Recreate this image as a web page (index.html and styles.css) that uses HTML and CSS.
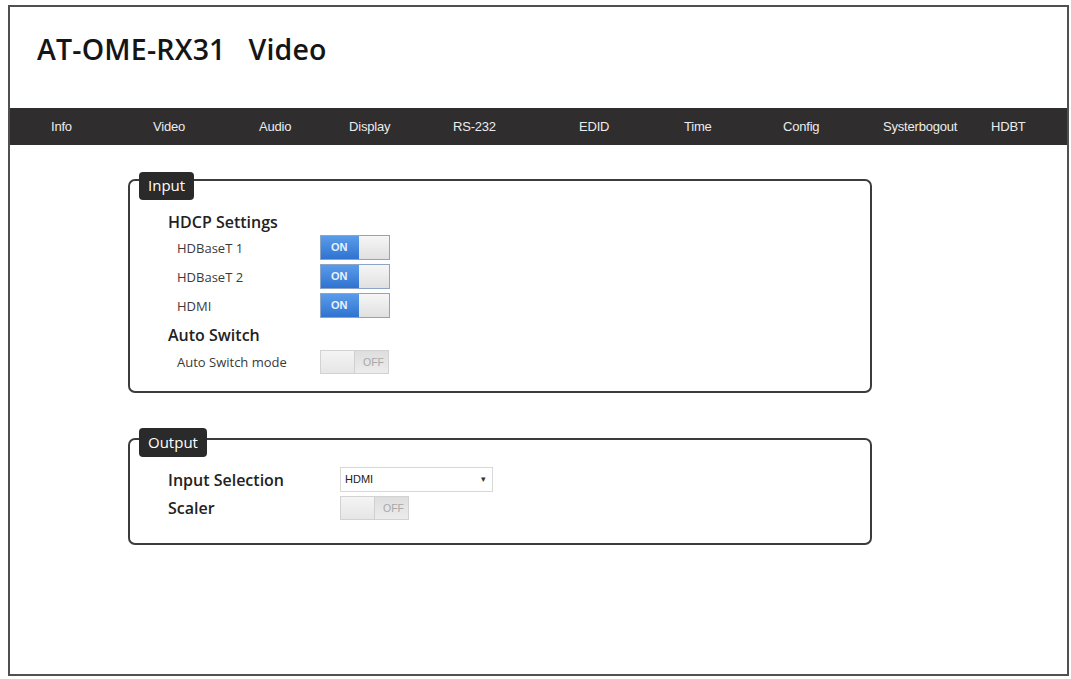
FILE: index.html
```html
<!DOCTYPE html>
<html>
<head>
<meta charset="utf-8">
<link rel="stylesheet" href="styles.css">
</head>
<body>
<div class="frame">
  <header class="head">
    <h1 class="title">AT-OME-RX31&nbsp;&nbsp; Video</h1>
  </header>
  <nav class="nav">
    <span>Info</span>
    <span>Video</span>
    <span>Audio</span>
    <span>Display</span>
    <span>RS-232</span>
    <span>EDID</span>
    <span>Time</span>
    <span>Config</span>
    <span>Systerbogout</span>
    <span>HDBT</span>
  </nav>
  <main class="content">
    <section class="box box-input">
      <div class="legend">Input</div>
      <div class="heading h-hdcp">HDCP Settings</div>
      <div class="rows">
        <div class="row"><span class="label">HDBaseT 1</span><span class="toggle on"><span class="t-on">ON</span><span class="t-rest"></span></span></div>
        <div class="row"><span class="label">HDBaseT 2</span><span class="toggle on"><span class="t-on">ON</span><span class="t-rest"></span></span></div>
        <div class="row"><span class="label">HDMI</span><span class="toggle on"><span class="t-on">ON</span><span class="t-rest"></span></span></div>
      </div>
      <div class="heading h-auto">Auto Switch</div>
      <div class="rows">
        <div class="row"><span class="label">Auto Switch mode</span><span class="toggle off"><span class="t-rest"></span><span class="t-off">OFF</span></span></div>
      </div>
    </section>
    <section class="box box-output">
      <div class="legend legend-out">Output</div>
      <div class="orow orow-first"><span class="heading olabel">Input Selection</span><span class="select">HDMI<span class="arrow">&#9662;</span></span></div>
      <div class="orow"><span class="heading olabel">Scaler</span><span class="toggle off"><span class="t-rest"></span><span class="t-off">OFF</span></span></div>
    </section>
  </main>
</div>
</body>
</html>
```

FILE: styles.css
```css
html, body {
  margin: 0;
  padding: 0;
  background: #fff;
}
.frame {
  box-sizing: border-box;
  margin: 5px 0 0 8px;
  width: 1061px;
  height: 671px;
  border: 2px solid #505050;
  display: flex;
  flex-direction: column;
}
.head {
  height: 101px;
  box-sizing: border-box;
  padding: 24px 0 0 27px;
}
.title {
  margin: 0;
  font-family: "Open Sans", "DejaVu Sans", sans-serif;
  font-weight: 600;
  font-size: 28.5px;
  line-height: 36px;
  color: #151515;
  letter-spacing: 0.2px;
}
.nav {
  height: 37px;
  background: #2f2d2d;
  display: grid;
  grid-template-columns: 102px 106px 90px 104px 126px 105px 99px 100px 108px auto;
  align-items: center;
  padding-left: 41px;
  font-family: "Liberation Sans", Arial, sans-serif;
  font-size: 13px;
  color: #ececec;
  letter-spacing: -0.2px;
}
.content {
  padding: 34px 0 0 118px;
  font-family: "Open Sans", "DejaVu Sans", sans-serif;
}
.box {
  width: 744px;
  box-sizing: border-box;
  border: 2px solid #3c3c3c;
  border-radius: 7px;
}
.box-input {
  height: 214px;
}
.box-output {
  margin-top: 45px;
  height: 107px;
}
.legend {
  display: inline-block;
  margin: -9px 0 0 9px;
  height: 28px;
  padding: 0 9px 0 9px;
  background: #2b2a2a;
  border-radius: 4px;
  color: #fff;
  font-size: 15px;
  line-height: 26px;
  vertical-align: top;
}
.legend-out {
  margin-top: -12px;
  height: 29px;
  line-height: 28px;
}
.heading {
  font-weight: 600;
  font-size: 16px;
  color: #222;
}
.h-hdcp {
  padding-left: 38px;
  margin-top: 7px;
  line-height: 24px;
}
.h-auto {
  padding-left: 38px;
  line-height: 24px;
  margin-top: 5px;
}
.rows {
  display: flex;
  flex-direction: column;
  gap: 4px;
  padding-left: 47px;
}
.h-hdcp + .rows {
  margin-top: 1px;
}
.h-auto + .rows {
  margin-top: 2px;
}
.row {
  display: flex;
  align-items: center;
  height: 25px;
}
.label {
  width: 143px;
  font-size: 13px;
  color: #3a3a3a;
}
.toggle {
  display: flex;
  box-sizing: border-box;
  width: 70px;
  height: 25px;
  border: 1px solid #8ea4c4;
  font-family: "Liberation Sans", Arial, sans-serif;
  font-size: 11px;
  font-weight: bold;
}
.toggle.on .t-on {
  width: 38px;
  background: linear-gradient(#5a9cea, #2f73d0);
  color: #e9f1fb;
  line-height: 23px;
  padding-left: 10px;
  box-sizing: border-box;
}
.toggle .t-rest {
  flex: 1;
  background: linear-gradient(#f6f6f6, #e0e0e0);
}
.toggle.off {
  border: 1px solid #d2d2d2;
  width: 69px;
  height: 24px;
}
.toggle.off .t-rest {
  flex: none;
  width: 33px;
  background: linear-gradient(#f4f4f4, #e6e6e6);
  border-right: 1px solid #cfcfcf;
}
.toggle.off .t-off {
  flex: 1;
  background: linear-gradient(#dedede, #ececec);
  color: #a8a8a8;
  font-weight: normal;
  font-size: 10.5px;
  line-height: 22px;
  padding-left: 8px;
}
.orow {
  display: flex;
  align-items: center;
  padding-left: 38px;
}
.orow-first {
  margin-top: 5px;
  height: 25px;
}
.orow + .orow {
  margin-top: 4px;
  height: 23px;
}
.olabel {
  width: 172px;
}
.select {
  box-sizing: border-box;
  width: 153px;
  height: 25px;
  border: 1px solid #d8d8d8;
  font-family: "Liberation Sans", Arial, sans-serif;
  font-size: 11px;
  color: #222;
  line-height: 23px;
  padding-left: 4px;
  display: flex;
  justify-content: space-between;
}
.arrow {
  font-size: 9px;
  padding-right: 6px;
  color: #333;
}
```
